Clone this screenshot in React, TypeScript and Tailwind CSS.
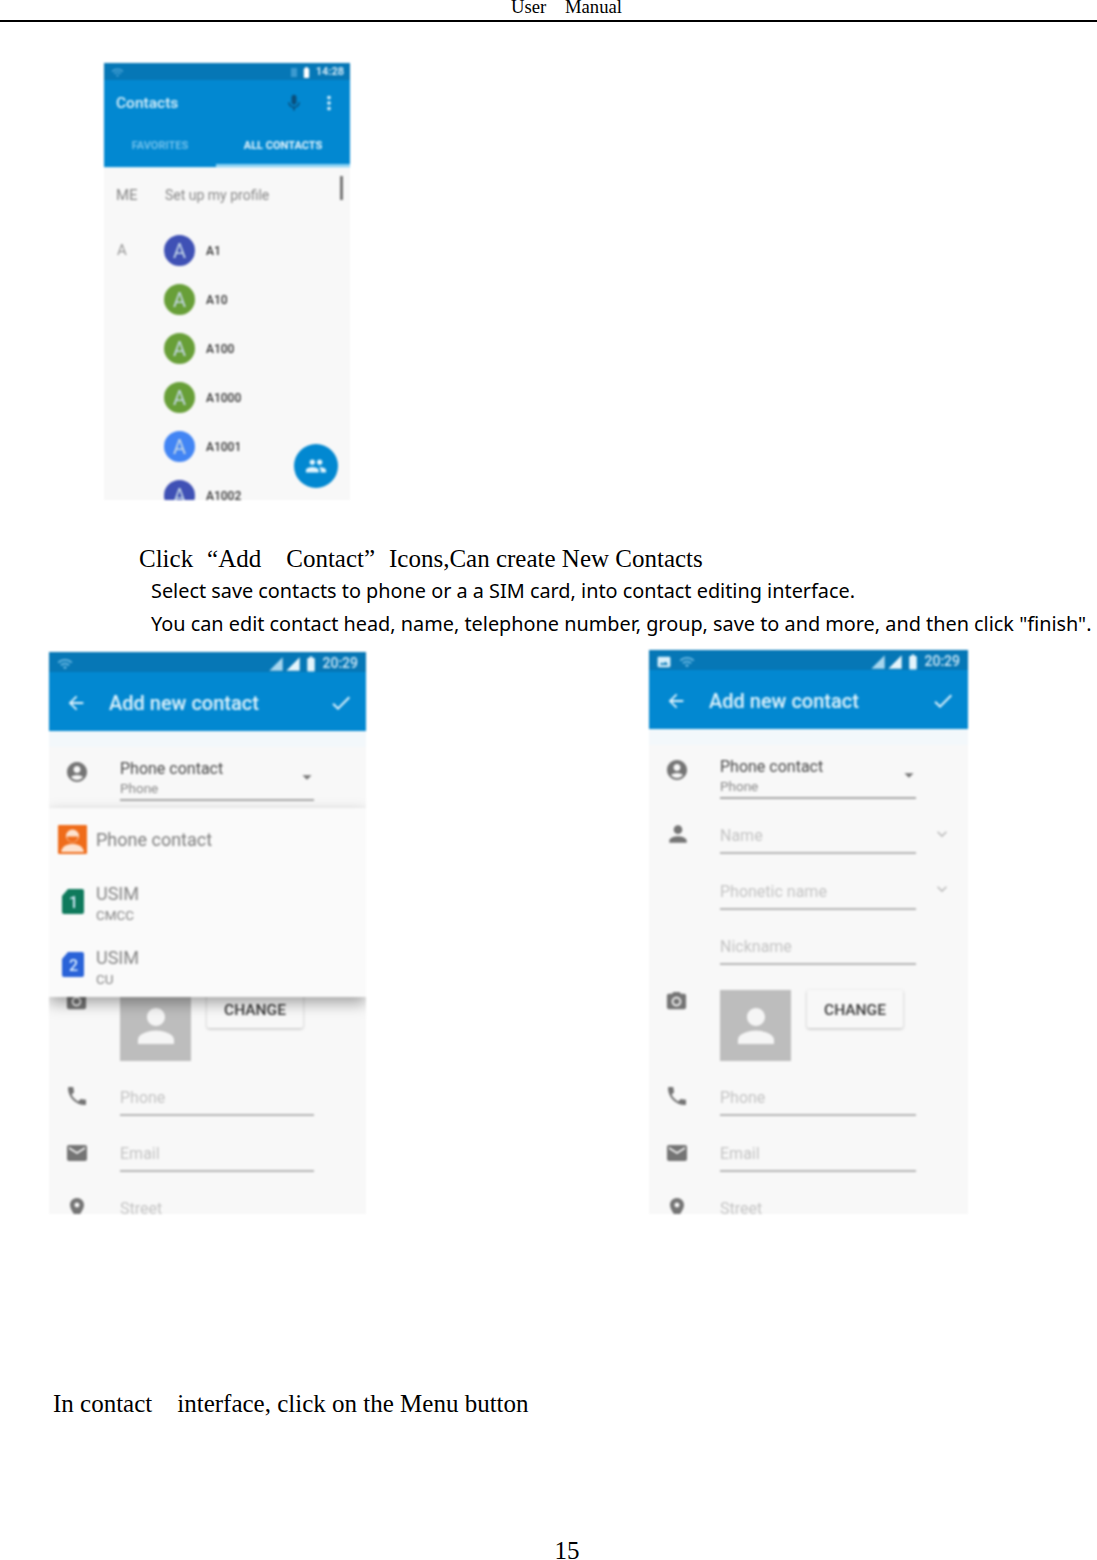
import React from "react";
import {
  MdAccountCircle,
  MdArrowBack,
  MdArrowDropDown,
  MdBatteryFull,
  MdCameraAlt,
  MdCheck,
  MdEmail,
  MdExpandMore,
  MdMic,
  MdMoreVert,
  MdPeople,
  MdPerson,
  MdPhone,
  MdPlace,
  MdPhotoSizeSelectActual,
  MdSignalCellular4Bar,
  MdWifi,
} from "react-icons/md";

const serif = "font-['Liberation_Serif',serif] text-black";
const sans = "font-['Noto_Sans',sans-serif] text-black";
const roboto = "font-['Roboto',sans-serif]";

const contacts = [
  { name: "A1", color: "bg-[#3f51b5]" },
  { name: "A10", color: "bg-[#689f38]" },
  { name: "A100", color: "bg-[#689f38]" },
  { name: "A1000", color: "bg-[#689f38]" },
  { name: "A1001", color: "bg-[#4285f4]" },
  { name: "A1002", color: "bg-[#3f51b5]" },
];

const ContactsScreen = () => (
  <div className={`relative ml-[104px] mt-[41px] h-[437px] w-[246px] shrink-0 overflow-hidden bg-[#f8f8f8] blur-[0.8px] ${roboto}`}>
    <div className="flex h-[17px] items-center justify-between bg-[#0677b6] pl-[7px] pr-[6px] pt-[1px] text-white">
      <MdWifi size={13} className="text-[#4ea6d8]" />
      <div className="flex items-center gap-[3px] text-[11px] font-bold text-[#cfe8f6]">
        <span className="h-[9px] w-[6px] bg-[#3c9ad0]" />
        <MdBatteryFull size={13} className="text-white" />
        <span>14:28</span>
      </div>
    </div>
    <div className="flex h-[87px] flex-col bg-[#0288d1]">
      <div className="flex h-[46px] items-center justify-between pl-[12px] pr-[10px]">
        <span className="pt-[2px] text-[15.5px] font-medium text-[#d8f0fb]">Contacts</span>
        <div className="flex items-center gap-[14px]">
          <MdMic size={20} className="text-[#0a4f7c]" />
          <MdMoreVert size={22} className="text-[#d8f0fb]" />
        </div>
      </div>
      <div className="flex flex-1 text-[11px] font-bold">
        <div className="flex w-[112px] items-center justify-center text-[#6fc0ec]">FAVORITES</div>
        <div className="flex flex-1 items-center justify-center border-b-[3px] border-[#8fd3f4] pt-[2px] text-[#e8f6fd]">
          ALL CONTACTS
        </div>
      </div>
    </div>
    <div className="h-[1px] bg-[#d4ecf8]" />
    <div className="flex h-[58px] items-center pb-[3px] pl-[12px] text-[#888]">
      <span className="w-[49px] text-[15px]">ME</span>
      <span className="text-[14px]">Set up my profile</span>
    </div>
    {contacts.map((c, i) => (
      <div key={c.name} className="flex h-[49px] shrink-0 items-center">
        <span className="w-[60px] pl-[13px] text-[15px] text-[#999]">{i === 0 ? "A" : ""}</span>
        <span className={`flex h-[31px] w-[31px] items-center justify-center rounded-full text-[20px] text-[#c5d8e8] ${c.color}`}>A</span>
        <span className="ml-[11px] text-[12px] font-medium text-[#333]">{c.name}</span>
      </div>
    ))}
    <div className="absolute right-[7px] top-[113px] h-[24px] w-[3px] bg-[#777]" />
    <div className="absolute left-[190px] top-[381px] flex h-[44px] w-[44px] items-center justify-center rounded-full bg-[#0288d1]">
      <MdPeople size={22} className="text-[#e0f4fd]" />
    </div>
  </div>
);

const IconCol = ({ children, className = "" }: { children?: React.ReactNode; className?: string }) => (
  <div className={`flex w-[71px] shrink-0 items-center pl-[16px] text-[#757575] ${className}`}>{children}</div>
);

const Field = ({ label, icon, more, h = "h-[55px]", iconPad = "pt-[14px]" }: { label: string; icon?: React.ReactNode; more?: boolean; h?: string; iconPad?: string }) => (
  <div className={`flex shrink-0 ${h}`}>
    <IconCol className={iconPad}>{icon}</IconCol>
    <div className="flex flex-1 items-center border-b-[2px] border-[#b5b5b5] pt-[21px] text-[16px] text-[#c4c4c4]">{label}</div>
    <div className="flex w-[52px] items-center justify-center pt-[14px] text-[#bdbdbd]">
      {more && <MdExpandMore size={20} />}
    </div>
  </div>
);

const ContactForm = ({ compact, title }: { compact?: boolean; title?: string }) => (
  <div className="flex h-full flex-col overflow-hidden bg-[#f8f8f8]">
    <div className="h-[16px] shrink-0 bg-[#f3f8fb]" />
    <div className="flex h-[54px] shrink-0">
      <IconCol className="pb-[5px]"><MdAccountCircle size={24} /></IconCol>
      <div className="flex flex-1 flex-col border-b-[2px] border-[#a8a8a8] leading-none">
        <span className="mt-[14px] text-[16px] text-[#4a4a4a]">{title}</span>
        <span className="mt-[5px] text-[13.5px] text-[#8a8a8a]">Phone</span>
      </div>
      <div className="flex w-[52px] items-center justify-start pt-[6px] text-[#757575]">
        <MdArrowDropDown size={22} className="-ml-[18px]" />
      </div>
    </div>
    {/* these rows sit under the account menu on the left screen */}
    {compact ? (
      <div className="h-[164px] shrink-0" />
    ) : (
      <>
        <Field label="Name" more icon={<MdPerson size={26} />} />
        <Field label="Phonetic name" more h="h-[56px]" />
        <Field label="Nickname" />
      </>
    )}
    <div className="mt-[25px] flex h-[71px] shrink-0">
      <div className="flex w-[71px] shrink-0 items-start pl-[16px] text-[#757575]">
        <MdCameraAlt size={23} />
      </div>
      <div className="flex h-[71px] w-[71px] items-center justify-center bg-[#bdbdbd] text-[#f5f5f5]">
        <MdPerson size={54} />
      </div>
      <div className="ml-[16px] flex h-[38px] w-[96px] items-center justify-center rounded-[2px] bg-[#f8f8f8] pt-[4px] text-[15.5px] font-medium text-[#3a3a3a] shadow-[0_1px_3px_rgba(0,0,0,0.25)]">
        CHANGE
      </div>
    </div>
    <Field label="Phone" icon={<MdPhone size={24} />} />
    <Field label="Email" icon={<MdEmail size={24} />} h="h-[56px]" iconPad="pt-[18px]" />
    <div className="flex h-[44px] shrink-0">
      <IconCol className="items-start pt-[24px]"><MdPlace size={24} /></IconCol>
      <div className="pt-[29px] text-[16px] leading-none text-[#c4c4c4]">Street</div>
    </div>
  </div>
);

const Bar = ({ saved }: { saved?: boolean }) => (
  <>
    <div className="flex h-[20px] shrink-0 items-center justify-between bg-[#0677b6] px-[8px] pt-[3px]">
      <div className="flex items-center gap-[8px]">
        {saved && <MdPhotoSizeSelectActual size={14} className="text-[#d8f0fb]" />}
        <MdWifi size={16} className="text-[#6ab8e2]" />
      </div>
      <div className="flex items-center gap-[1px] text-[14px] font-medium text-[#cfe8f6]">
        <MdSignalCellular4Bar size={16} className="text-[#a8d6ee]" />
        <MdSignalCellular4Bar size={16} className="text-[#e4f4fb]" />
        <MdBatteryFull size={18} className="text-[#e4f4fb]" />
        <span className="ml-[1px]">20:29</span>
      </div>
    </div>
    <div className="flex h-[59px] shrink-0 items-center justify-between bg-[#0288d1] pl-[16px] pr-[13px] pt-[2px] text-[#dff3fc] shadow-[0_1px_2px_rgba(2,136,209,0.5)]">
      <div className="flex items-center">
        <MdArrowBack size={22} />
        <span className="ml-[22px] text-[20px] font-medium">Add new contact</span>
      </div>
      <MdCheck size={24} />
    </div>
  </>
);

const SimIcon = ({ n, color, className }: { n: string; color: string; className: string }) => (
  <svg width="24" height="27" viewBox="0 0 24 27" className={`shrink-0 ${className}`}>
    <path d="M7 1h14a2 2 0 0 1 2 2v21a2 2 0 0 1-2 2H3a2 2 0 0 1-2-2V8z" fill={color} />
    <text x="12.5" y="20" textAnchor="middle" fontSize="16" fontWeight="500" fill="#dcefff">{n}</text>
  </svg>
);

const AccountMenu = () => (
  <div className="absolute left-0 right-0 top-[156px] flex h-[189px] flex-col bg-[#fafafa] shadow-[0_6px_14px_rgba(0,0,0,0.35)]">
    <div className="flex h-[64px] items-center pb-[2px] pl-[9px]">
      <svg width="29" height="29" viewBox="0 0 29 29" className="shrink-0">
        <rect width="29" height="29" rx="1" fill="#ef6c1a" />
        <circle cx="14.5" cy="11" r="6.5" fill="#fde3d0" />
        <path d="M9 11.5h11a5.5 5.5 0 0 1-11 0z" fill="#ef6c1a" />
        <path d="M3 27c1-6 6-8 11.5-8S25 21 26 27z" fill="#fde3d0" />
      </svg>
      <span className="ml-[9px] text-[18px] text-[#7d7d7d]">Phone contact</span>
    </div>
    <div className="flex h-[63px] items-center pl-[12px]">
      <SimIcon n="1" color="#0f7a5c" className="mb-[4px]" />
      <div className="ml-[11px] flex flex-col leading-none text-[#858585]">
        <span className="text-[18px]">USIM</span>
        <span className="mt-[6px] text-[13.5px]">CMCC</span>
      </div>
    </div>
    <div className="flex h-[62px] items-center pl-[12px] pt-[4px]">
      <SimIcon n="2" color="#2a63d8" className="mb-[8px]" />
      <div className="ml-[11px] flex flex-col leading-none text-[#858585]">
        <span className="text-[18px]">USIM</span>
        <span className="mt-[6px] text-[13.5px]">CU</span>
      </div>
    </div>
  </div>
);

export default function App() {
  return (
    <div className="flex h-[1560px] w-[1097px] flex-col overflow-hidden bg-white">
      <div className={`flex h-[22px] shrink-0 justify-center border-b-2 border-black pl-[36px] text-[18.67px] leading-[14px] whitespace-pre ${serif}`}>
        {"User    Manual"}
      </div>

      <ContactsScreen />

      <div className={`ml-[139px] mt-[44px] h-[30px] shrink-0 text-[25px] leading-[30px] whitespace-pre ${serif}`}>
        Click<span className="inline-block w-[25px] text-right">“</span>Add{"    "}Contact<span className="inline-block w-[25px]">”</span>Icons,Can create New Contacts
      </div>
      <div className={`ml-[151px] h-[33px] shrink-0 text-[19.85px] leading-[33px] whitespace-nowrap ${sans}`}>
        Select save contacts to phone or a a SIM card, into contact editing interface.
      </div>
      <div className={`ml-[151px] h-[33px] shrink-0 text-[19.85px] leading-[33px] whitespace-nowrap ${sans}`}>
        You can edit contact head, name, telephone number, group, save to and more, and then click "finish".
      </div>

      <div className="mt-[10px] flex h-[564px] shrink-0 items-end">
        <div className={`relative ml-[49px] flex h-[562px] w-[317px] flex-col overflow-hidden blur-[0.8px] ${roboto}`}>
          <Bar />
          <ContactForm compact title="Phone contact" />
          <AccountMenu />
        </div>
        <div className={`ml-[283px] flex h-[564px] w-[319px] flex-col overflow-hidden blur-[0.8px] ${roboto}`}>
          <Bar saved />
          <ContactForm title="Phone contact" />
        </div>
      </div>

      <div className={`ml-[53px] mt-[175px] h-[30px] shrink-0 text-[25px] leading-[30px] whitespace-pre ${serif}`}>
        {"In contact    interface, click on the Menu button"}
      </div>
      <div className={`ml-[37px] mt-[117px] h-[30px] shrink-0 text-center text-[25px] leading-[30px] ${serif}`}>15</div>
    </div>
  );
}
